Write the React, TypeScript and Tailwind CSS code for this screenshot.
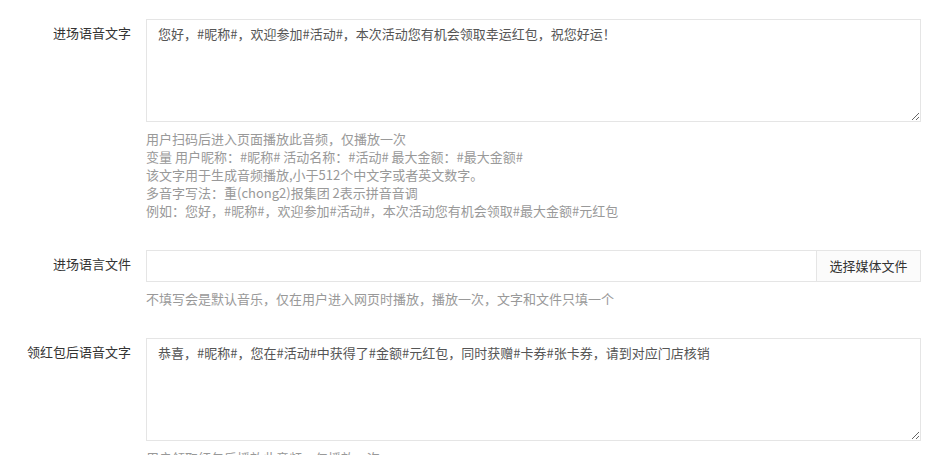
import React from 'react';

const font = { fontFamily: '"Noto Sans CJK SC", "Noto Sans", sans-serif' };

const Help = ({ lines }: { lines: string[] }) => (
    <div className="mt-2 text-[13px] leading-[18px] text-[#999]">
        {lines.map((l, i) => (
            <div key={i}>{l}</div>
        ))}
    </div>
);

const Row = ({ label, children }: { label: string; children: React.ReactNode }) => (
    <div className="flex mb-[30px]">
        <label className="w-[131px] shrink-0 text-right text-[13px] leading-[18px] pt-[5px] text-[#333]">{label}</label>
        <div className="ml-[15px] w-[775px]">{children}</div>
    </div>
);

const App = () => {
    return (
        <div className="bg-white min-h-[455px] pt-[19px] overflow-hidden [text-spacing-trim:space-all]" style={font}>
            <Row label="进场语音文字">
                <textarea
                    className="block w-full h-[103px] border border-[#e5e5e5] px-[11px] py-[5px] text-[13px] leading-[18px] text-[#555] outline-none [text-spacing-trim:space-all]"
                    defaultValue="您好，#昵称#，欢迎参加#活动#，本次活动您有机会领取幸运红包，祝您好运！"
                />
                <Help
                    lines={[
                        '用户扫码后进入页面播放此音频，仅播放一次',
                        '变量 用户昵称：#昵称# 活动名称：#活动# 最大金额：#最大金额#',
                        '该文字用于生成音频播放,小于512个中文字或者英文数字。',
                        '多音字写法：重(chong2)报集团 2表示拼音音调',
                        '例如：您好，#昵称#，欢迎参加#活动#，本次活动您有机会领取#最大金额#元红包',
                    ]}
                />
            </Row>
            <Row label="进场语言文件">
                <div className="flex h-[32px]">
                    <input className="flex-1 border border-[#e5e5e5] px-[11px] text-[13px] text-[#555] outline-none" />
                    <button className="w-[104px] border border-l-0 border-[#e5e5e5] bg-[#fbfbfb] text-[13px] text-[#333]">
                        选择媒体文件
                    </button>
                </div>
                <Help lines={['不填写会是默认音乐，仅在用户进入网页时播放，播放一次，文字和文件只填一个']} />
            </Row>
            <Row label="领红包后语音文字">
                <textarea
                    className="block w-full h-[103px] border border-[#e5e5e5] px-[11px] py-[5px] text-[13px] leading-[18px] text-[#555] outline-none [text-spacing-trim:space-all]"
                    defaultValue="恭喜，#昵称#，您在#活动#中获得了#金额#元红包，同时获赠#卡券#张卡券，请到对应门店核销"
                />
                <Help lines={['用户领取红包后播放此音频，仅播放一次']} />
            </Row>
        </div>
    );
};

export default App;
